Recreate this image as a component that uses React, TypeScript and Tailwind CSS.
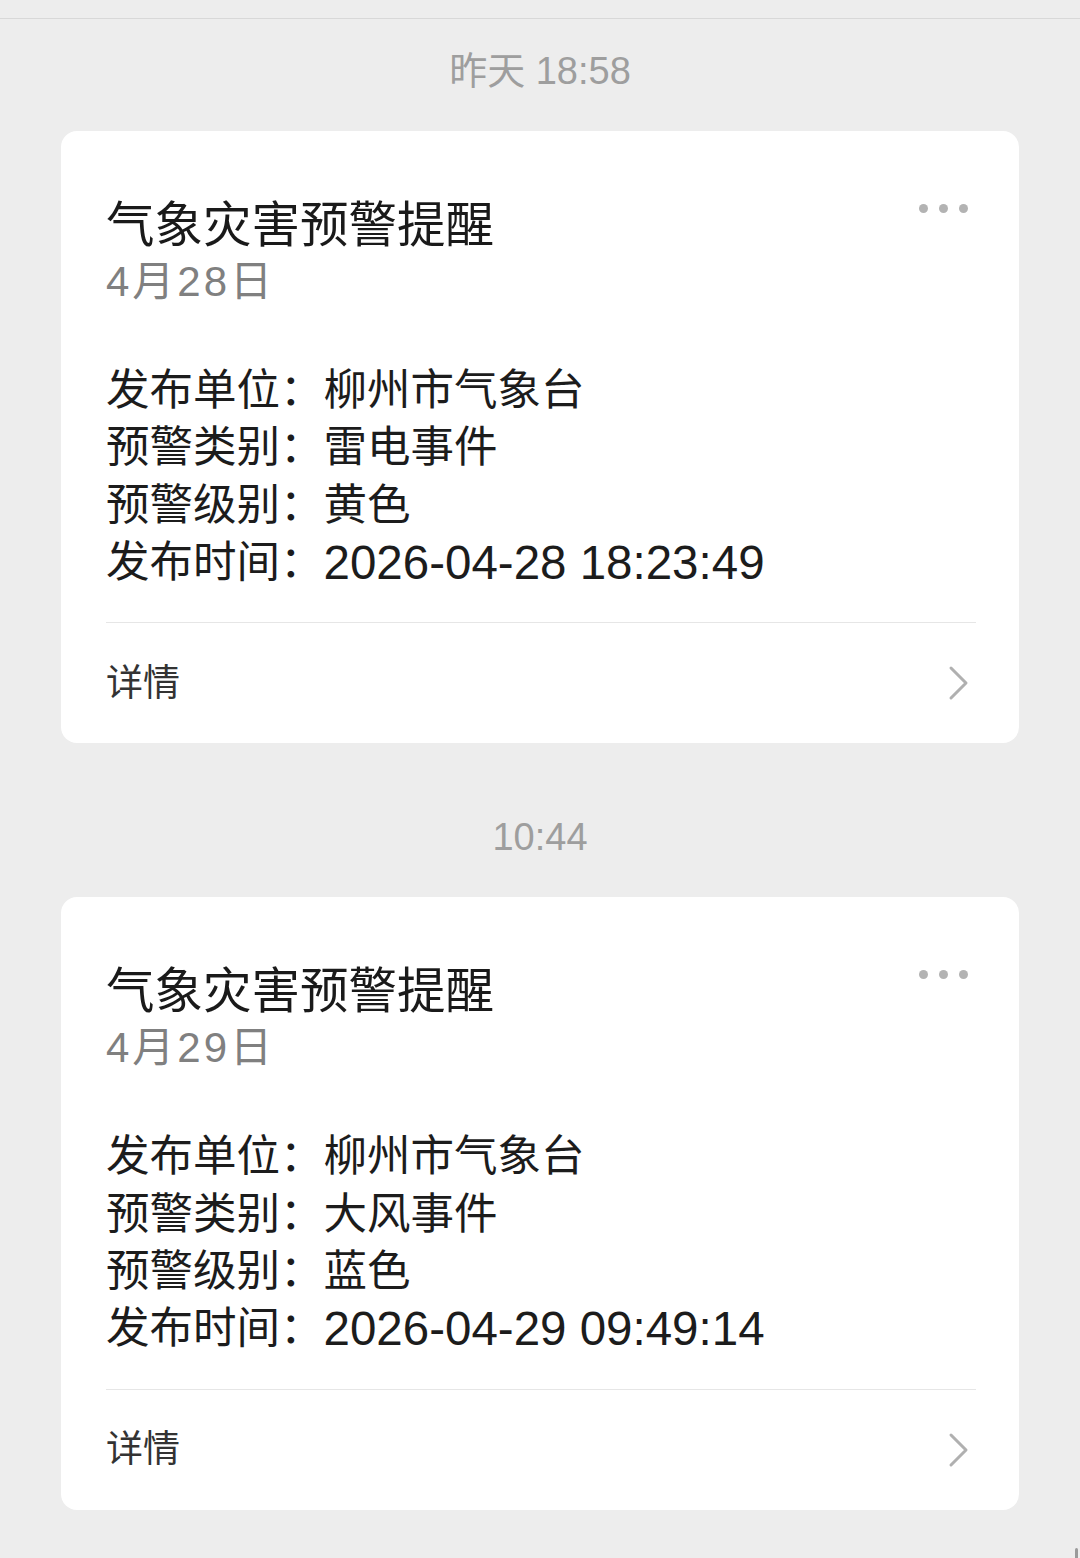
import React from "react";

const FONT = { fontFamily: '"Liberation Sans", "Noto Sans CJK SC", sans-serif' };

type Card = {
  time: string;
  date: string;
  kind: string;
  level: string;
  at: string;
};

const cards: Card[] = [
  { time: "昨天 18:58", date: "4月28日", kind: "雷电事件", level: "黄色", at: "2026-04-28 18:23:49" },
  { time: "10:44", date: "4月29日", kind: "大风事件", level: "蓝色", at: "2026-04-29 09:49:14" },
];

function Dots() {
  return (
    <div className="mt-[7px] flex h-[9px] items-center gap-[11px] pr-[8px]">
      <span className="block h-[9px] w-[9px] rounded-full bg-[#b3b3b3]" />
      <span className="block h-[9px] w-[9px] rounded-full bg-[#b3b3b3]" />
      <span className="block h-[9px] w-[9px] rounded-full bg-[#b3b3b3]" />
    </div>
  );
}

function Chevron() {
  return (
    <svg width="22" height="36" viewBox="0 0 22 36" fill="none" className="mr-[6px]">
      <path d="M3 3 L18 18 L3 33" stroke="#b0b0b0" strokeWidth="3" strokeLinecap="round" strokeLinejoin="round" />
    </svg>
  );
}

function Row({ label, value, digits }: { label: string; value: string; digits?: boolean }) {
  return (
    <div className="flex h-[57.33px] items-center whitespace-nowrap">
      <span className="shrink-0">{label}：</span>
      <span className={digits ? "text-[47.5px]" : ""}>{value}</span>
    </div>
  );
}

function AlertCard({ c }: { c: Card }) {
  return (
    <>
      <div className="flex h-[40px] items-center justify-center whitespace-nowrap text-[38px] text-[#9e9e9e]">{c.time}</div>
      <div className="mx-[61px] mt-[40px] rounded-[16px] bg-white pl-[45px] pr-[43px] pt-[66px]">
        <div className="flex items-start justify-between">
          <div className="whitespace-nowrap text-[48.5px] leading-[56px] text-[#1a1a1a]">气象灾害预警提醒</div>
          <Dots />
        </div>
        <div className="text-[42px] leading-[57px] tracking-[3px] text-[#808080]">{c.date}</div>
        <div className="mt-[52px] text-[43.5px] text-[#1c1c1c]">
          <Row label="发布单位" value="柳州市气象台" />
          <Row label="预警类别" value={c.kind} />
          <Row label="预警级别" value={c.level} />
          <Row label="发布时间" value={c.at} digits />
        </div>
        <div className="mt-[31px] h-px bg-[#e6e6e6]" />
        <div className="flex h-[120px] items-center justify-between">
          <span className="text-[37px] text-[#333333]">详情</span>
          <Chevron />
        </div>
      </div>
    </>
  );
}

export default function App() {
  return (
    <div className="relative h-[1558px] w-[1080px] overflow-hidden bg-[#ededed]" style={FONT}>
      <div className="h-[19px] border-b border-[#d8d8d8]" />
      <div className="pt-[32px]">
        <AlertCard c={cards[0]} />
      </div>
      <div className="pt-[74px]">
        <AlertCard c={cards[1]} />
      </div>
      <div className="absolute bottom-0 right-[2px] h-[10px] w-[3px] rounded-t-full bg-[#9a9a9a]" />
    </div>
  );
}
